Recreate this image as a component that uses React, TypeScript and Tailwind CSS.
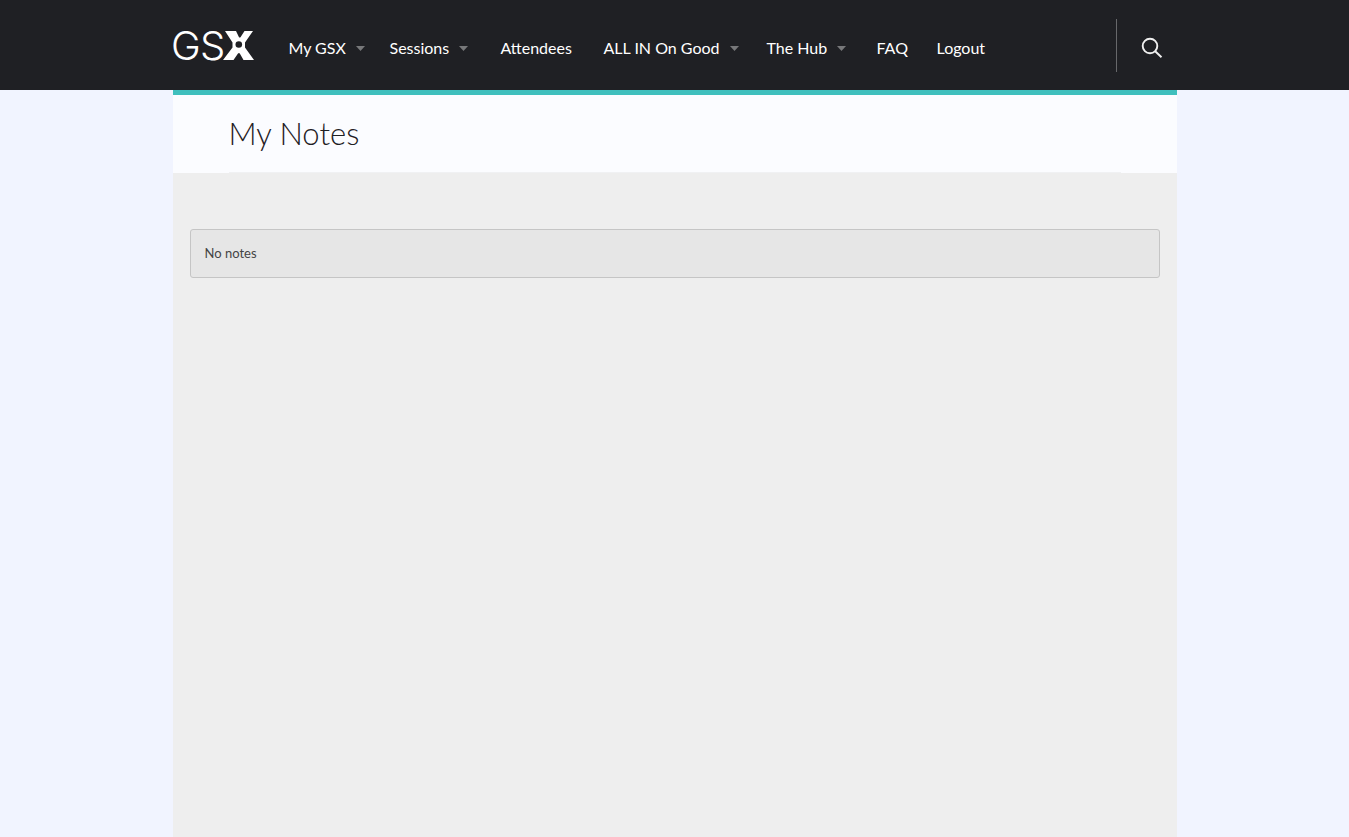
import React from "react";

type NavItem = { label: string; menu?: boolean; width: string };

const items: NavItem[] = [
  { label: "My GSX", menu: true, width: "w-[101px]" },
  { label: "Sessions", menu: true, width: "w-[111px]" },
  { label: "Attendees", width: "w-[103px]" },
  { label: "ALL IN On Good", menu: true, width: "w-[163px]" },
  { label: "The Hub", menu: true, width: "w-[110px]" },
  { label: "FAQ", width: "w-[60px]" },
  { label: "Logout", width: "w-[60px]" },
];

function Logo() {
  return (
    <svg
      width="82"
      height="60"
      viewBox="0 -15 82 60"
      fill="#fff"
      className="overflow-visible"
      role="img"
      aria-label="GSX"
    >
      <text x="-2" y="30" fontFamily="Inter, sans-serif" fontWeight="300" fontSize="40">
        G
      </text>
      <text x="27" y="30" fontFamily="Inter, sans-serif" fontWeight="300" fontSize="40">
        S
      </text>
      <path d="M52 1H63L66 7.200Q66.500 8 67.500 7.200L71.500 1H80L72 12.500V17.500L81 30H70.500L66.800 23.500Q66 22.500 65 23.500L60.500 30H50L59.500 17.500V12.500Z" />
      <circle cx="65.800" cy="14.500" r="3.300" fill="#1f2024" />
    </svg>
  );
}

function Caret() {
  return (
    <svg width="9" height="5" viewBox="0 0 9 5" fill="#77787a" aria-hidden="true">
      <path d="M0 0H9L4.500 5Z" />
    </svg>
  );
}

export default function App() {
  return (
    <div className="flex min-h-screen flex-col bg-[#f1f4ff] font-['Lato','Liberation_Sans',sans-serif]">
      <header className="bg-[#1f2024]">
        <div className="mx-auto flex h-[90px] w-full max-w-[1004px] items-center">
          <a href="#" className="mr-[34px] shrink-0">
            <Logo />
          </a>
          <nav aria-label="Main" className="pt-1.5">
            <ul className="flex text-base text-white">
              {items.map((item) => (
                <li key={item.label} className={item.width}>
                  <a href="#" className="flex items-center gap-2.5 whitespace-nowrap">
                    {item.label}
                    {item.menu && <Caret />}
                  </a>
                </li>
              ))}
            </ul>
          </nav>
          <div className="ml-auto flex h-[53px] items-center border-l border-[#67686b] pl-6 pr-[14px] pt-1.5">
            <button type="button" aria-label="Search">
              <svg width="22" height="22" viewBox="0 0 22 22" fill="none" stroke="#f0f0f0" strokeWidth="1.900">
                <circle cx="9" cy="9" r="7.300" />
                <path d="M14.200 14.200L20.500 20.300" />
              </svg>
            </button>
          </div>
        </div>
      </header>
      <main className="mx-auto w-full max-w-[1004px] grow bg-[#eee]">
        <div className="border-t-[5px] border-[#3fbfbd] bg-[#fbfcff] px-14">
          <h1 className="border-b border-[#f0f1f3] py-[18px] text-[31px] font-light leading-[41px] text-[#1f2024]">
            My Notes
          </h1>
        </div>
        <div className="px-[17px] pt-14">
          <p className="rounded-[3px] border border-[#c5c5c5] bg-[#e6e6e6] px-[14px] py-[14px] text-[13px] leading-[19px] text-[#444]">
            No notes
          </p>
        </div>
      </main>
    </div>
  );
}
